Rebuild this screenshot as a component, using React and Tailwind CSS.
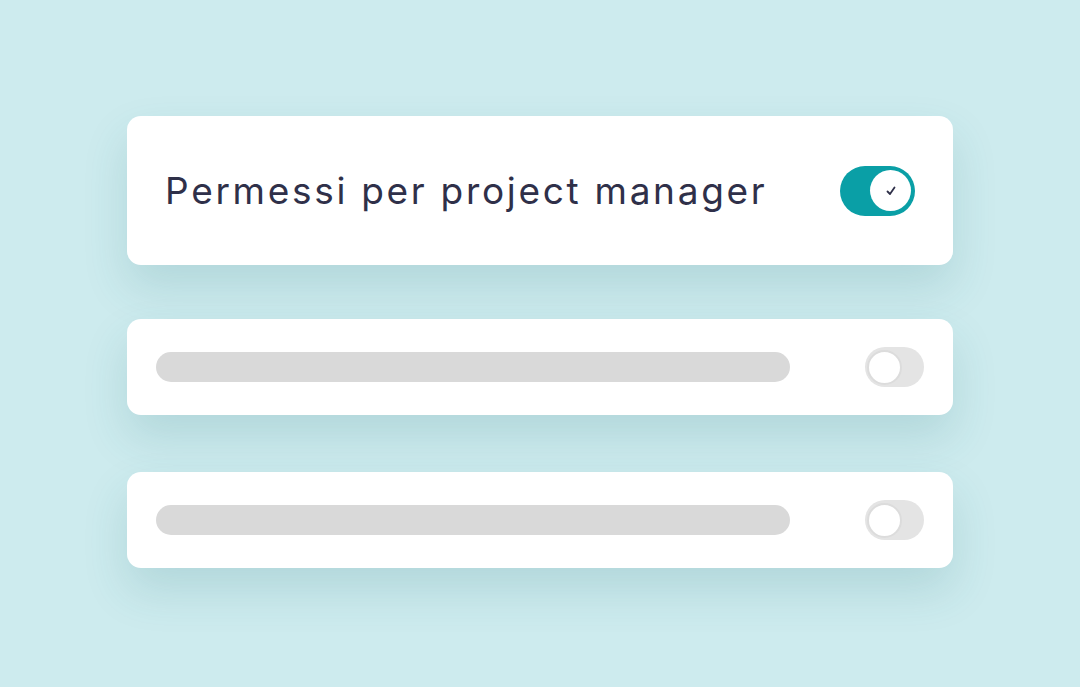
export default function App() {
  const font = { fontFamily: "Inter, 'Noto Sans', sans-serif" };
  return (
    <div className="w-[1080px] h-[687px] bg-[#cdebee] overflow-hidden" style={font}>
      <div className="w-[826px] mx-auto pt-[116px] flex flex-col">
        <div className="h-[149px] bg-white rounded-[14px] shadow-[0_22px_45px_rgba(40,110,120,0.16)] flex items-center justify-between pl-[38px] pr-[38px]">
          <span className="text-[37px] text-[#2f3049] tracking-[2.7px] leading-none">Permessi per project manager</span>
          <div className="w-[75px] h-[50px] rounded-full bg-[#0a9fa6] flex items-center justify-end pr-[4px]">
            <div className="w-[41px] h-[41px] rounded-full bg-white flex items-center justify-center">
              <svg width="12" height="12" viewBox="0 0 12 12" fill="none">
                <path d="M2.5 6.5 L5 9 L9.5 2.5" stroke="#2f3049" strokeWidth="1.8" strokeLinecap="round" strokeLinejoin="round" />
              </svg>
            </div>
          </div>
        </div>
        {[0, 1].map((i) => (
          <div key={i} className={(i === 0 ? "mt-[54px] " : "mt-[57px] ") + "h-[96px] bg-white rounded-[14px] shadow-[0_22px_45px_rgba(40,110,120,0.16)] flex items-center justify-between pl-[29px] pr-[29px]"}>
            <div className="w-[634px] h-[30px] rounded-full bg-[#d9d9d9]" />
            <div className="w-[59px] h-[40px] rounded-full bg-[#e4e4e4] flex items-center pl-[2px]">
              <div className="w-[35px] h-[35px] rounded-full bg-white border-[2px] border-[#dcdcdc]" />
            </div>
          </div>
        ))}
      </div>
    </div>
  );
}
